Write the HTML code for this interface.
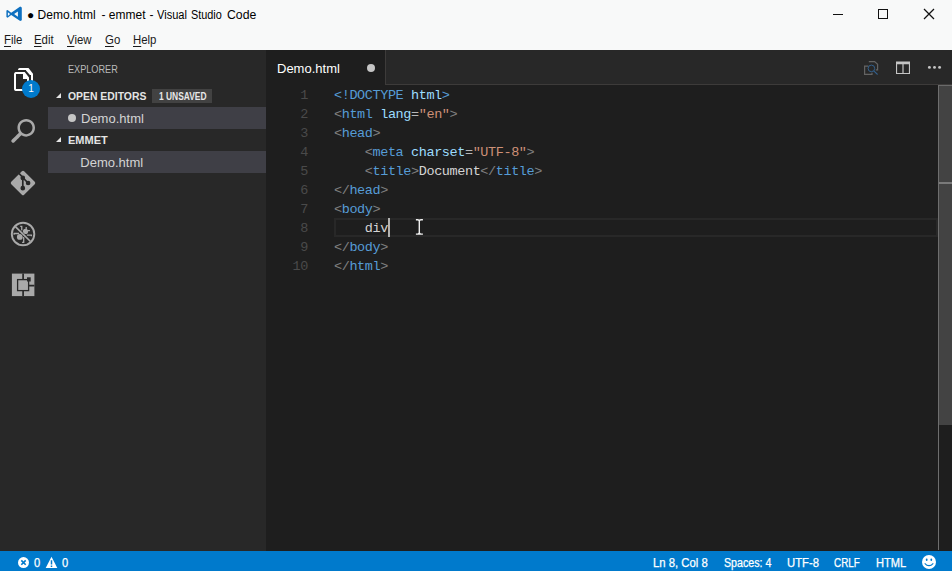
<!DOCTYPE html>
<html lang="en">
<head>
<meta charset="UTF-8">
<title>Demo.html - emmet - Visual Studio Code</title>
<style>
*{box-sizing:border-box;margin:0;padding:0}
html,body{width:952px;height:571px;overflow:hidden;background:#1e1e1e}
body{position:relative;font-family:"Liberation Sans",sans-serif;font-size:13px;color:#ccc}
.abs{position:absolute;white-space:nowrap}
#titlebar{left:0;top:0;width:952px;height:50px;background:#f8f9f9}
#title{left:27px;top:7px;font-size:12px;line-height:16px;color:#000}
#title span{position:absolute;top:0;white-space:pre;transform-origin:0 0}
.menu{top:32px;font-size:12px;line-height:16px;color:#1a1a1a;transform-origin:0 0;transform:scaleX(0.95);margin-left:0.4px}
.menu u{text-decoration:underline;text-underline-offset:2px}
#activity{left:0;top:50px;width:48px;height:501px;background:#282828}
#sidebar{left:48px;top:50px;width:218px;height:501px;background:#282828}
#editor{left:266px;top:50px;width:686px;height:501px;background:#1e1e1e}
#tabbar{left:385px;top:50px;width:567px;height:35px;background:#282828;border-left:1px solid #3d3b3a;border-bottom:1px solid #3d3b3a}
#tab{left:266px;top:50px;width:119px;height:35px;background:#1e1e1e}
#status{left:0;top:551px;width:952px;height:20px;background:#007acc;color:#fff;font-size:12px}
.st{top:556px;-webkit-text-stroke:0.25px #fff;transform-origin:0 0;font-size:12px;line-height:14px;color:#fff}
.row{left:48px;width:218px;height:22px;background:#3f3f46}
.sbtxt{font-size:13px;line-height:16px;color:#d4d4d4}
.hdr{font-size:11px;line-height:14px;font-weight:bold;color:#e4e4e4}
.code{font-family:"Liberation Mono",monospace;font-size:13.5px;line-height:19px;letter-spacing:-0.4px;white-space:pre;margin-top:1px;color:#d4d4d4}
.ln{left:266px;width:42px;text-align:right;color:#4a4a4a}
.cl{left:334px}
.tw{width:0;height:0;border-style:solid;border-width:0 0 5px 5px;border-color:transparent transparent #e4e4e4 transparent}
.e{color:#b8b8b8}.g{color:#808080}.b{color:#569cd6}.a{color:#9cdcfe}.s{color:#ce9178}
</style>
</head>
<body>
<div id="titlebar" class="abs"></div>
<div id="title" class="abs"><span style="left:0">● Demo.html </span><span style="left:74.5px">- emmet </span><span style="left:122.4px">- </span><span style="left:130.4px;transform:scaleX(0.923)">Visual </span><span style="left:164.2px;transform:scaleX(0.906)">Studio </span><span style="left:199.5px;transform:scaleX(1.02)">Code</span></div>
<div class="abs menu" style="left:4px"><u>F</u>ile</div>
<div class="abs menu" style="left:34px"><u>E</u>dit</div>
<div class="abs menu" style="left:67px"><u>V</u>iew</div>
<div class="abs menu" style="left:105px"><u>G</u>o</div>
<div class="abs menu" style="left:133px"><u>H</u>elp</div>

<div id="activity" class="abs"></div>
<div id="sidebar" class="abs"></div>
<div id="editor" class="abs"></div>
<div id="tabbar" class="abs"></div>
<div id="tab" class="abs"></div>
<div id="status" class="abs"></div>

<!-- sidebar -->
<div class="abs" id="explorer" style="left:68px;top:62px;transform-origin:0 0;transform:scaleX(0.83);font-size:11px;line-height:14px;color:#bbbbbb">EXPLORER</div>
<div class="abs tw" style="left:56px;top:93px"></div>
<div class="abs hdr" id="oe" style="left:68px;top:89px;transform-origin:0 0;transform:scaleX(0.945)">OPEN EDITORS</div>
<div class="abs" id="badge" style="left:152px;top:89px;width:60px;height:14px;background:#424242"></div>
<div class="abs" id="badgetxt" style="left:158.5px;top:91px;transform-origin:0 0;transform:scaleX(0.84);font-size:10px;line-height:12px;color:#e8e8e8;font-weight:bold">1 UNSAVED</div>
<div class="abs row" style="top:107px"></div>
<div class="abs" style="left:68px;top:114px;width:8px;height:8px;border-radius:50%;background:#c5c5c5"></div>
<div class="abs sbtxt" id="f1" style="left:81px;top:110.5px">Demo.html</div>
<div class="abs tw" style="left:56px;top:137px"></div>
<div class="abs hdr" id="em" style="left:68px;top:133px">EMMET</div>
<div class="abs row" style="top:151px"></div>
<div class="abs sbtxt" id="f2" style="left:80.3px;top:154.5px">Demo.html</div>

<!-- tab -->
<div class="abs" id="tabtxt" style="left:277px;top:61px;font-size:13px;line-height:16px;color:#fff">Demo.html</div>
<div class="abs" style="left:367px;top:64px;width:8px;height:8px;border-radius:50%;background:#c5c5c5"></div>

<!-- code -->
<div class="abs" id="curline" style="left:334px;top:218px;width:604px;height:19px;border:2px solid #282828"></div>
<div class="abs code ln" style="top:85px">1</div>
<div class="abs code ln" style="top:104px">2</div>
<div class="abs code ln" style="top:123px">3</div>
<div class="abs code ln" style="top:142px">4</div>
<div class="abs code ln" style="top:161px">5</div>
<div class="abs code ln" style="top:180px">6</div>
<div class="abs code ln" style="top:199px">7</div>
<div class="abs code ln" style="top:218px">8</div>
<div class="abs code ln" style="top:237px">9</div>
<div class="abs code ln" style="top:256px">10</div>
<div class="abs code cl" id="c1" style="top:85px"><span class="b">&lt;!DOCTYPE</span> <span class="a">html</span><span class="b">&gt;</span></div>
<div class="abs code cl" style="top:104px"><span class="g">&lt;</span><span class="b">html</span> <span class="a">lang</span><span class="e">=</span><span class="s">"en"</span><span class="g">&gt;</span></div>
<div class="abs code cl" style="top:123px"><span class="g">&lt;</span><span class="b">head</span><span class="g">&gt;</span></div>
<div class="abs code cl" style="top:142px">    <span class="g">&lt;</span><span class="b">meta</span> <span class="a">charset</span><span class="e">=</span><span class="s">"UTF-8"</span><span class="g">&gt;</span></div>
<div class="abs code cl" id="c5" style="top:161px">    <span class="g">&lt;</span><span class="b">title</span><span class="g">&gt;</span>Document<span class="g">&lt;/</span><span class="b">title</span><span class="g">&gt;</span></div>
<div class="abs code cl" style="top:180px"><span class="g">&lt;/</span><span class="b">head</span><span class="g">&gt;</span></div>
<div class="abs code cl" style="top:199px"><span class="g">&lt;</span><span class="b">body</span><span class="g">&gt;</span></div>
<div class="abs code cl" id="c8" style="top:218px">    div</div>
<div class="abs code cl" style="top:237px"><span class="g">&lt;/</span><span class="b">body</span><span class="g">&gt;</span></div>
<div class="abs code cl" style="top:256px"><span class="g">&lt;/</span><span class="b">html</span><span class="g">&gt;</span></div>
<div class="abs" id="cursor" style="left:388px;top:218px;width:2px;height:19px;background:#b2b2b0"></div>

<!-- scrollbar -->
<div class="abs" style="left:938px;top:85px;width:1px;height:465px;background:#6e6e6e"></div>
<div class="abs" style="left:939px;top:85px;width:13px;height:340px;background:#434343;border-top:1px solid #6a6a6a"></div>
<div class="abs" style="left:939px;top:182px;width:13px;height:2px;background:#7a7a7a"></div>

<!-- status text -->
<div class="abs st" id="s0" style="left:33.8px;transform:scaleX(0.93)">0</div>
<div class="abs st" id="s1" style="left:62.3px;transform:scaleX(0.93)">0</div>
<div class="abs st" id="s2" style="left:653.3px;transform:scaleX(0.945)">Ln 8, Col 8</div>
<div class="abs st" id="s3" style="left:723.6px;transform:scaleX(0.89)">Spaces: 4</div>
<div class="abs st" id="s4" style="left:787px;transform:scaleX(0.94)">UTF-8</div>
<div class="abs st" id="s5" style="left:833.5px;transform:scaleX(0.825)">CRLF</div>
<div class="abs st" id="s6" style="left:875.5px;transform:scaleX(0.927)">HTML</div>

<!-- logo -->
<svg class="abs" style="left:0;top:0" width="30" height="30" viewBox="0 0 30 30">
<path d="M20.2 6.6 L21.8 7.4 V20.2 L20.2 21 L11.2 14.9 L7.6 17.7 L6.4 17.1 V10.5 L7.6 9.9 L11.2 12.7 Z M17.9 11.5 L14.1 14.1 L17.9 16.8 Z M7.9 12.3 V15.9 L10.1 14.1 Z" fill="#0e70c0" fill-rule="evenodd"/>
</svg>
<!-- window controls -->
<svg class="abs" style="left:820px;top:0" width="132" height="30" viewBox="0 0 132 30" fill="none" stroke="#111" stroke-width="1">
<path d="M13 14.5 H23"/>
<rect x="58.5" y="9.5" width="9" height="9"/>
<path d="M104 9 L114 19 M114 9 L104 19" stroke-width="1.25"/>
</svg>

<!-- activity: files -->
<svg class="abs" style="left:7px;top:64px" width="32" height="32" viewBox="0 0 32 32"><path d="M17.705 8h-8.705s-2 .078-2 2v15s0 2 2 2l11-.004c2 .004 2-1.996 2-1.996v-11.491l-4.295-5.509zm-1.705 2v5h4v10h-11v-15h7zm5.509-6h-8.493s-2.016.016-2.031 2h8.015v.454l3.931 4.546h1.069v12c2 0 2-1.995 2-1.995v-11.357l-4.491-5.648z" fill="#fff"/></svg>
<div class="abs" style="left:22px;top:80px;width:18px;height:18px;border-radius:50%;background:#007acc"></div>
<div class="abs" id="bdg1" style="left:22px;top:80px;width:18px;height:18px;line-height:18px;text-align:center;font-size:10px;color:#fff">1</div>
<!-- activity: search -->
<svg class="abs" style="left:7px;top:115px" width="32" height="32" viewBox="0 0 32 32"><path fill="#a9a9a9" d="M19.23 4.095c-4.842 0-8.769 3.928-8.769 8.771 0 1.781.539 3.43 1.449 4.815 0 0-5.482 5.455-7.102 7.102-1.621 1.646 1.001 4.071 2.602 2.409 1.602-1.659 7.006-7.005 7.006-7.005 1.384.911 3.035 1.45 4.814 1.45 4.845 0 8.772-3.93 8.772-8.771.001-4.844-3.927-8.771-8.772-8.771zm0 15.035c-3.459 0-6.265-2.804-6.265-6.264 0-3.46 2.806-6.266 6.265-6.266 3.462 0 6.266 2.806 6.266 6.266 0 3.46-2.804 6.264-6.266 6.264z"/></svg>
<!-- activity: git -->
<svg class="abs" style="left:7px;top:166px" width="32" height="32" viewBox="0 0 32 32">
<rect x="6.9" y="7.9" width="18.2" height="18.2" rx="1.6" transform="rotate(45 16 17)" fill="#a9a9a9"/>
<g stroke="#282828" stroke-width="1.7" fill="#282828"><path d="M12 7.4 L15.8 11.5 V22.2 M15.8 11.7 L21.1 17" fill="none"/><circle cx="15.8" cy="11.9" r="1.5"/><circle cx="15.8" cy="22.2" r="1.5"/><circle cx="21.1" cy="17" r="1.5"/></g>
</svg>
<!-- activity: debug -->
<svg class="abs" style="left:7px;top:217px" width="32" height="32" viewBox="0 0 32 32" fill="none" stroke="#a9a9a9">
<circle cx="12.8" cy="19.9" r="2.9" fill="#a9a9a9" stroke="none"/>
<circle cx="18.5" cy="14.4" r="2.6" fill="#a9a9a9" stroke="none"/>
<path d="M7.1 17.8 V16.5 H12.1 M13.2 9.3 H14.75 V13.4 M19.2 10.1 V12.7 M20.3 13.6 H22.9 M19.8 18.1 H24.4 V19.3 M15.1 25.4 H16.7 V19.9" stroke-width="1.3"/>
<path d="M9.4 10.6 L22.6 23.6" stroke="#282828" stroke-width="2.7"/>
<path d="M8.4 9.6 L23.5 24.5" stroke-width="1.7"/>
<circle cx="16.05" cy="17" r="11.25" stroke-width="1.9"/>
</svg>
<!-- activity: extensions -->
<svg class="abs" style="left:7px;top:268px" width="32" height="32" viewBox="0 0 32 32">
<rect x="4.9" y="5.6" width="22.5" height="22.5" fill="#a9a9a9"/>
<path d="M16.1 5.6 V11.5 M16.1 22.6 V28.1 M21.8 17.7 H27.4" stroke="#282828" stroke-width="1.7" fill="none"/>
<rect x="10.6" y="11.6" width="11" height="11" fill="#a9a9a9" stroke="#282828" stroke-width="1.3"/>
<rect x="20" y="9.3" width="3.7" height="4.2" fill="#282828"/>
</svg>

<!-- tab actions -->
<svg class="abs" style="left:860px;top:58px" width="22" height="20" viewBox="0 0 22 20" fill="none">
<path d="M8.8 3.6 H14.6 L17.6 6.3 V11.8 H15.8" stroke="#646464" stroke-width="1.2"/>
<path d="M8.4 8.1 H4.6 V16.4 H12 V14.8" stroke="#646464" stroke-width="1.2"/>
<circle cx="11.4" cy="10.4" r="3.3" stroke="#33608c" stroke-width="1"/>
<path d="M13.7 12.8 L17.6 16.5" stroke="#33608c" stroke-width="1.1"/>
</svg>
<svg class="abs" style="left:894px;top:60px" width="18" height="16" viewBox="0 0 18 16">
<path d="M2 1.6 H16 V14 H2 Z M3.1 4.2 V13 H8.4 V4.2 Z M9.6 4.2 V13 H14.9 V4.2 Z" fill="#c5c5c5" fill-rule="evenodd"/>
</svg>
<svg class="abs" style="left:926px;top:64px" width="18" height="8" viewBox="0 0 18 8" fill="#c5c5c5">
<circle cx="3.4" cy="3.4" r="1.45"/><circle cx="8.5" cy="3.4" r="1.45"/><circle cx="13.6" cy="3.4" r="1.45"/>
</svg>

<!-- status icons -->
<svg class="abs" style="left:17px;top:556px" width="13" height="13" viewBox="0 0 13 13">
<circle cx="6.5" cy="6.6" r="5.5" fill="#fff"/>
<path d="M4.3 4.4 L8.7 8.8 M8.7 4.4 L4.3 8.8" stroke="#007acc" stroke-width="1.6"/>
</svg>
<svg class="abs" style="left:45px;top:556px" width="13" height="13" viewBox="0 0 13 13">
<path d="M6.5 0.8 L12.3 12 H0.7 Z" fill="#fff"/>
<path d="M6.5 4.2 V8.4 M6.5 9.4 V11" stroke="#007acc" stroke-width="1.5"/>
</svg>
<svg class="abs" style="left:921px;top:554px" width="16" height="16" viewBox="0 0 16 16">
<circle cx="8" cy="8" r="7" fill="#fff"/>
<ellipse cx="5.7" cy="5.8" rx="0.9" ry="1.3" fill="#007acc"/><ellipse cx="10.3" cy="5.8" rx="0.9" ry="1.3" fill="#007acc"/>
<path d="M3.7 9.3 Q8 14 12.3 9.3" stroke="#007acc" stroke-width="1.1" fill="none"/>
</svg>

<!-- mouse I-beam -->
<svg class="abs" style="left:415px;top:218px" width="10" height="18" viewBox="0 0 10 18" fill="none" stroke="#f0f0f0" stroke-width="1.4">
<path d="M0.9 1.7 H2.6 Q4.3 1.7 4.3 3.2 V14.6 Q4.3 16.1 2.6 16.1 H0.9 M7.9 1.7 H6 Q4.3 1.7 4.3 3.2 M4.3 14.6 Q4.3 16.1 6 16.1 H7.9"/>
</svg>
</body>
</html>
